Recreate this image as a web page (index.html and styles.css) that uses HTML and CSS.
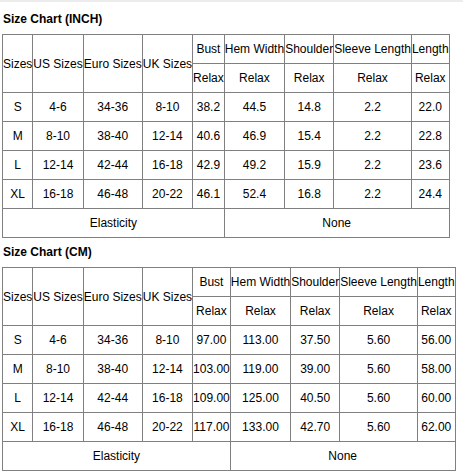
FILE: index.html
```html
<!DOCTYPE html>
<html lang="en">
<head>
    <meta charset="UTF-8">
    <title>Size Chart</title>
    <link rel="stylesheet" href="styles.css">
</head>
<body>
    <div class="page">
        <h3 class="chart-title">Size Chart (INCH)</h3>
        <table class="size-table">
            <tr>
                <td rowspan="2">Sizes</td>
                <td rowspan="2">US Sizes</td>
                <td rowspan="2">Euro Sizes</td>
                <td rowspan="2">UK Sizes</td>
                <td>Bust</td>
                <td>Hem Width</td>
                <td>Shoulder</td>
                <td>Sleeve Length</td>
                <td>Length</td>
            </tr>
            <tr>
                <td>Relax</td>
                <td>Relax</td>
                <td>Relax</td>
                <td>Relax</td>
                <td>Relax</td>
            </tr>
            <tr>
                <td>S</td><td>4-6</td><td>34-36</td><td>8-10</td>
                <td>38.2</td><td>44.5</td><td>14.8</td><td>2.2</td><td>22.0</td>
            </tr>
            <tr>
                <td>M</td><td>8-10</td><td>38-40</td><td>12-14</td>
                <td>40.6</td><td>46.9</td><td>15.4</td><td>2.2</td><td>22.8</td>
            </tr>
            <tr>
                <td>L</td><td>12-14</td><td>42-44</td><td>16-18</td>
                <td>42.9</td><td>49.2</td><td>15.9</td><td>2.2</td><td>23.6</td>
            </tr>
            <tr>
                <td>XL</td><td>16-18</td><td>46-48</td><td>20-22</td>
                <td>46.1</td><td>52.4</td><td>16.8</td><td>2.2</td><td>24.4</td>
            </tr>
            <tr>
                <td colspan="5">Elasticity</td>
                <td colspan="4">None</td>
            </tr>
        </table>

        <h3 class="chart-title chart-title-next">Size Chart (CM)</h3>
        <table class="size-table">
            <tr>
                <td rowspan="2">Sizes</td>
                <td rowspan="2">US Sizes</td>
                <td rowspan="2">Euro Sizes</td>
                <td rowspan="2">UK Sizes</td>
                <td>Bust</td>
                <td>Hem Width</td>
                <td>Shoulder</td>
                <td>Sleeve Length</td>
                <td>Length</td>
            </tr>
            <tr>
                <td>Relax</td>
                <td>Relax</td>
                <td>Relax</td>
                <td>Relax</td>
                <td>Relax</td>
            </tr>
            <tr>
                <td>S</td><td>4-6</td><td>34-36</td><td>8-10</td>
                <td>97.00</td><td>113.00</td><td>37.50</td><td>5.60</td><td>56.00</td>
            </tr>
            <tr>
                <td>M</td><td>8-10</td><td>38-40</td><td>12-14</td>
                <td>103.00</td><td>119.00</td><td>39.00</td><td>5.60</td><td>58.00</td>
            </tr>
            <tr>
                <td>L</td><td>12-14</td><td>42-44</td><td>16-18</td>
                <td>109.00</td><td>125.00</td><td>40.50</td><td>5.60</td><td>60.00</td>
            </tr>
            <tr>
                <td>XL</td><td>16-18</td><td>46-48</td><td>20-22</td>
                <td>117.00</td><td>133.00</td><td>42.70</td><td>5.60</td><td>62.00</td>
            </tr>
            <tr>
                <td colspan="5">Elasticity</td>
                <td colspan="4">None</td>
            </tr>
        </table>
    </div>
</body>
</html>
```

FILE: styles.css
```css
/* Size chart page */
body {
    margin: 0;
    background-color: #fff;
    color: #000;
    font-family: "Liberation Sans", Arial, sans-serif;
    font-size: 12px;
}
.page {
    border-top: 2px solid #ececec;
    padding: 9px 0 0 2px;
}
.chart-title {
    margin: 0 0 6px 1px;
    font-size: 12px;
    line-height: 17px;
    font-weight: bold;
}
.chart-title-next {
    margin-top: 6px;
}
.size-table {
    border-collapse: collapse;
}
.size-table td {
    border: 1px solid #808080;
    padding: 0;
    height: 28px;
    text-align: center;
    vertical-align: middle;
    white-space: nowrap;
}
```
